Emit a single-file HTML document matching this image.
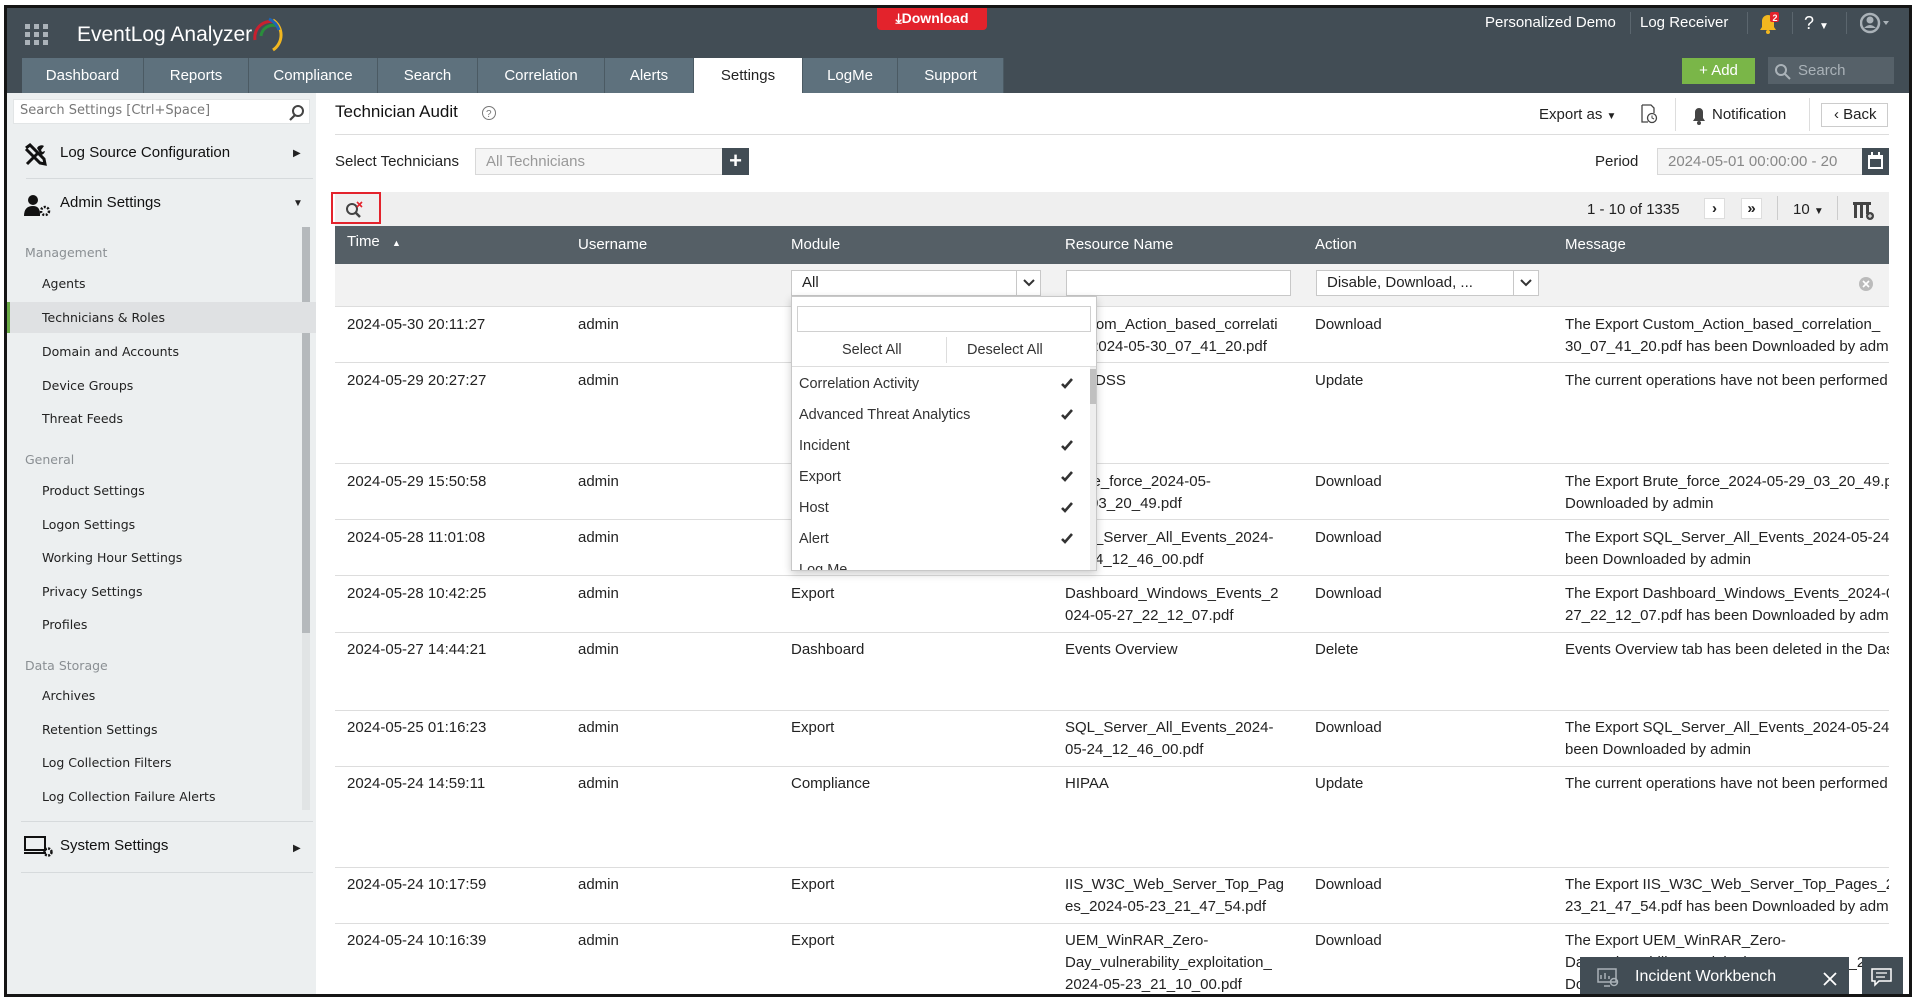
<!DOCTYPE html>
<html><head><meta charset="utf-8">
<style>
*{box-sizing:border-box;margin:0;padding:0}
body{width:1920px;height:1003px;background:#fff;position:relative;overflow:hidden;font-family:"Liberation Sans",sans-serif;font-size:15px;color:#222}
.a{position:absolute}
.frame{position:absolute;left:4px;top:5px;width:1908px;height:992px;border:3px solid #151515;overflow:hidden;background:#fff}
.hdr{left:0;top:0;width:1902px;height:85px;background:#424d55}
.tab{top:50px;height:35px;background:#5e717d;color:#fff;font-size:15px;line-height:35px;text-align:center;border-right:1px solid #4b5a63}
.tab.on{background:#fff;color:#222}
.side{left:0;top:85px;width:309px;height:905px;background:#eceff0}
.sd{font-family:"DejaVu Sans",sans-serif;font-size:12.5px;color:#222}
.sh{font-family:"DejaVu Sans",sans-serif;font-size:12.5px;color:#8a8f93}
.th{color:#fff;font-size:15px}
.c{font-size:15px;color:#222;line-height:22px}
.hl{height:1px;background:#ddd;left:328px;width:1554px}
.dd{font-size:14.5px;color:#333}
</style></head><body>
<div class="frame">
<div class="a hdr"></div>
<svg class="a" style="left:18px;top:16px" width="24" height="22"><g fill="#aab2b8"><rect x="0" y="0" width="5" height="5"/><rect x="9" y="0" width="5" height="5"/><rect x="18" y="0" width="5" height="5"/><rect x="0" y="8" width="5" height="5"/><rect x="9" y="8" width="5" height="5"/><rect x="18" y="8" width="5" height="5"/><rect x="0" y="16" width="5" height="5"/><rect x="9" y="16" width="5" height="5"/><rect x="18" y="16" width="5" height="5"/></g></svg>
<div class="a" style="left:70px;top:15px;color:#fff;font-size:21px">EventLog Analyzer</div>
<svg class="a" style="left:244px;top:6px" width="40" height="40"><path d="M4 26 A16 16 0 0 1 24 8" stroke="#c8202f" stroke-width="3" fill="none"/><path d="M10 22 A12 12 0 0 1 26 12" stroke="#2a8d3c" stroke-width="3" fill="none"/><path d="M22 6 A18 18 0 0 1 22 36" stroke="#f2b71f" stroke-width="3" fill="none"/><path d="M18 5 A18 18 0 0 1 28 16" stroke="#1e63b5" stroke-width="3" fill="none"/></svg>
<div class="a" style="left:870px;top:0;width:110px;height:22px;background:#e3232c;border-radius:0 0 4px 4px;color:#fff;font-weight:bold;font-size:14px;line-height:20px;text-align:center">⤓Download</div>
<div class="a" style="left:1478px;top:6px;color:#fff;font-size:15px">Personalized Demo</div>
<div class="a" style="left:1623px;top:4px;width:1px;height:22px;background:#5b666e"></div>
<div class="a" style="left:1633px;top:6px;color:#fff;font-size:15px">Log Receiver</div>
<div class="a" style="left:1740px;top:4px;width:1px;height:22px;background:#5b666e"></div>
<svg class="a" style="left:1750px;top:4px" width="24" height="22"><path d="M3 18 L19 18 L17 15 L17 9 A6 6 0 0 0 5 9 L5 15 Z" fill="#f2b71f"/><circle cx="11" cy="20" r="2" fill="#f2b71f"/><rect x="13" y="0" width="9" height="10" rx="2" fill="#e3232c"/><text x="15.5" y="9" fill="#fff" font-size="9" font-family="Liberation Sans" font-weight="bold">2</text></svg>
<div class="a" style="left:1785px;top:4px;width:1px;height:22px;background:#5b666e"></div>
<div class="a" style="left:1797px;top:5px;color:#fff;font-size:18px">? <span style="font-size:10px">▼</span></div>
<div class="a" style="left:1839px;top:4px;width:1px;height:22px;background:#5b666e"></div>
<svg class="a" style="left:1853px;top:4px" width="34" height="22"><circle cx="10" cy="11" r="9" fill="none" stroke="#aab2b8" stroke-width="2.5"/><circle cx="10" cy="8" r="3.5" fill="#aab2b8"/><path d="M4 16 Q10 10 16 16" fill="#aab2b8"/><path d="M23 9 L29 9 L26 13 Z" fill="#aab2b8"/></svg>
<div class="a tab" style="left:15px;width:122px">Dashboard</div>
<div class="a tab" style="left:137px;width:105px">Reports</div>
<div class="a tab" style="left:242px;width:129px">Compliance</div>
<div class="a tab" style="left:371px;width:100px">Search</div>
<div class="a tab" style="left:471px;width:127px">Correlation</div>
<div class="a tab" style="left:598px;width:89px">Alerts</div>
<div class="a tab on" style="left:687px;width:109px">Settings</div>
<div class="a tab" style="left:796px;width:95px">LogMe</div>
<div class="a tab" style="left:891px;width:106px">Support</div>
<div class="a" style="left:1675px;top:50px;width:73px;height:26px;background:#7ab648;color:#fff;font-size:15px;line-height:26px;text-align:center">+ Add</div>
<div class="a" style="left:1761px;top:49px;width:126px;height:27px;background:#566169;color:#aab2b8;font-size:15px;line-height:27px;padding-left:30px">Search</div>
<svg class="a" style="left:1767px;top:55px" width="18" height="18"><circle cx="7" cy="7" r="5" fill="none" stroke="#aab2b8" stroke-width="2"/><path d="M11 11 L16 16" stroke="#aab2b8" stroke-width="2"/></svg>

<div class="a side"></div>
<div class="a" style="left:6px;top:91px;width:297px;height:25px;background:#fff;border:1px solid #e2e5e6"></div>
<div class="a sd" style="left:13px;top:95px;color:#777;font-size:13px">Search Settings [Ctrl+Space]</div>
<svg class="a" style="left:281px;top:96px" width="18" height="18"><circle cx="10" cy="7" r="5" fill="none" stroke="#444" stroke-width="2"/><path d="M7 11 L2 16" stroke="#444" stroke-width="2.2"/></svg>
<svg class="a" style="left:17px;top:135px" width="24" height="24"><path d="M3 21 L15 9 M2 5 L6 2 L20 16 L21 21 L16 20 L2 6" stroke="#111" stroke-width="3" fill="none"/><path d="M13 5 A5 5 0 0 1 20 3 L17 7 L18 9 L21 8 A5 5 0 0 1 17 12" fill="#111"/></svg>
<div class="a" style="left:53px;top:136px;font-size:15px;color:#111">Log Source Configuration</div>
<div class="a" style="left:286px;top:140px;font-size:10px">▶</div>
<div class="a" style="left:19px;top:170px;width:287px;height:1px;background:#d6dadc"></div>
<svg class="a" style="left:17px;top:186px" width="28" height="24"><circle cx="9" cy="6" r="5" fill="#111"/><path d="M0 22 Q0 12 9 12 Q16 12 16 20 L16 22 Z" fill="#111"/><circle cx="21" cy="17" r="4" fill="none" stroke="#111" stroke-width="2.5" stroke-dasharray="2 1.5"/></svg>
<div class="a" style="left:53px;top:186px;font-size:15px;color:#111">Admin Settings</div>
<div class="a" style="left:286px;top:190px;font-size:10px">▼</div>
<div class="a" style="left:295px;top:219px;width:8px;height:583px;background:#e1e4e5"></div>
<div class="a" style="left:295px;top:219px;width:8px;height:406px;background:#b5b9bc"></div>
<div class="a sh" style="left:18px;top:237px">Management</div>
<div class="a sd" style="left:35px;top:268px">Agents</div>
<div class="a" style="left:0;top:294px;width:309px;height:31px;background:#dfe1e3"></div>
<div class="a" style="left:0;top:294px;width:3px;height:31px;background:#6aab45"></div>
<div class="a sd" style="left:35px;top:302px">Technicians &amp; Roles</div>
<div class="a sd" style="left:35px;top:336px">Domain and Accounts</div>
<div class="a sd" style="left:35px;top:370px">Device Groups</div>
<div class="a sd" style="left:35px;top:403px">Threat Feeds</div>
<div class="a sh" style="left:18px;top:444px">General</div>
<div class="a sd" style="left:35px;top:475px">Product Settings</div>
<div class="a sd" style="left:35px;top:509px">Logon Settings</div>
<div class="a sd" style="left:35px;top:542px">Working Hour Settings</div>
<div class="a sd" style="left:35px;top:576px">Privacy Settings</div>
<div class="a sd" style="left:35px;top:609px">Profiles</div>
<div class="a sh" style="left:18px;top:650px">Data Storage</div>
<div class="a sd" style="left:35px;top:680px">Archives</div>
<div class="a sd" style="left:35px;top:714px">Retention Settings</div>
<div class="a sd" style="left:35px;top:747px">Log Collection Filters</div>
<div class="a sd" style="left:35px;top:781px">Log Collection Failure Alerts</div>
<div class="a" style="left:14px;top:813px;width:292px;height:1px;background:#d6dadc"></div>
<svg class="a" style="left:17px;top:828px" width="30" height="22"><rect x="1" y="1" width="20" height="13" fill="none" stroke="#111" stroke-width="2"/><path d="M0 17 L22 17" stroke="#111" stroke-width="2"/><circle cx="24" cy="16" r="3.5" fill="none" stroke="#111" stroke-width="2.5" stroke-dasharray="2 1.3"/></svg>
<div class="a" style="left:53px;top:829px;font-size:15px;color:#111">System Settings</div>
<div class="a" style="left:286px;top:835px;font-size:10px">▶</div>
<div class="a" style="left:14px;top:864px;width:292px;height:1px;background:#d6dadc"></div>

<div class="a" style="left:328px;top:94px;font-size:17px;color:#111">Technician Audit</div>
<svg class="a" style="left:474px;top:97px" width="16" height="16"><circle cx="8" cy="8" r="6.5" fill="none" stroke="#777"/><text x="5" y="12" font-size="10" fill="#777" font-family="Liberation Sans">?</text></svg>
<div class="a" style="left:1532px;top:98px;font-size:15px">Export as <span style="font-size:10px">▼</span></div>
<svg class="a" style="left:1633px;top:96px" width="18" height="20"><path d="M2 1 L11 1 L14 4 L14 9 M2 1 L2 18 L8 18" fill="none" stroke="#444" stroke-width="1.3"/><circle cx="12" cy="14" r="4.5" fill="none" stroke="#444" stroke-width="1.3"/><path d="M12 11.5 L12 14 L14 15" stroke="#444" fill="none"/></svg>
<div class="a" style="left:1668px;top:90px;width:1px;height:33px;background:#ddd"></div>
<svg class="a" style="left:1685px;top:98px" width="14" height="20"><path d="M1 15 L13 15 L11 12 L11 6 A4 4 0 0 0 3 6 L3 12 Z" fill="#444"/><circle cx="7" cy="17" r="2" fill="#444"/></svg>
<div class="a" style="left:1705px;top:98px;font-size:15px">Notification</div>
<div class="a" style="left:1802px;top:90px;width:1px;height:33px;background:#ddd"></div>
<div class="a" style="left:1814px;top:95px;width:67px;height:24px;border:1px solid #ccc;font-size:15px;line-height:22px;padding-left:12px">‹ Back</div>
<div class="a hl" style="top:126px"></div>
<div class="a" style="left:328px;top:145px;font-size:15px">Select Technicians</div>
<div class="a" style="left:468px;top:140px;width:248px;height:27px;background:#f5f5f5;border:1px solid #d8d8d8;color:#999;font-size:15px;line-height:25px;padding-left:10px">All Technicians</div>
<div class="a" style="left:715px;top:140px;width:27px;height:27px;background:#424d55;color:#fff;font-size:22px;line-height:25px;text-align:center;font-weight:bold">+</div>
<div class="a" style="left:1588px;top:145px;font-size:15px">Period</div>
<div class="a" style="left:1650px;top:140px;width:207px;height:27px;background:#f5f5f5;border:1px solid #d8d8d8;color:#888;font-size:15px;line-height:25px;padding-left:10px;overflow:hidden;white-space:nowrap">2024-05-01 00:00:00 - 20</div>
<div class="a" style="left:1855px;top:140px;width:27px;height:27px;background:#424d55"></div>
<svg class="a" style="left:1860px;top:143px" width="17" height="20"><rect x="1" y="4" width="15" height="14" fill="#fff"/><rect x="3" y="8" width="11" height="8" fill="#424d55"/><rect x="4" y="1" width="2" height="5" fill="#fff"/><rect x="11" y="1" width="2" height="5" fill="#fff"/></svg>

<div class="a" style="left:328px;top:184px;width:1554px;height:34px;background:#efefef"></div>
<div class="a" style="left:324px;top:184px;width:50px;height:32px;border:2px solid #e3232c"></div>
<svg class="a" style="left:338px;top:192px" width="22" height="20"><circle cx="7" cy="9" r="5" fill="none" stroke="#444" stroke-width="2"/><path d="M10.5 12.5 L15 17" stroke="#444" stroke-width="2.5"/><path d="M12 2 L17 7 M17 2 L12 7" stroke="#e3232c" stroke-width="1.6"/></svg>
<div class="a" style="left:1580px;top:193px;font-size:15px">1 - 10 of 1335</div>
<div class="a" style="left:1697px;top:190px;width:21px;height:21px;background:#fff;border:1px solid #ddd;text-align:center;font-weight:bold;line-height:19px">›</div>
<div class="a" style="left:1734px;top:190px;width:21px;height:21px;background:#fff;border:1px solid #ddd;text-align:center;font-weight:bold;line-height:19px">»</div>
<div class="a" style="left:1770px;top:188px;width:1px;height:24px;background:#ccc"></div>
<div class="a" style="left:1786px;top:193px;font-size:15px">10 <span style="font-size:10px">▼</span></div>
<div class="a" style="left:1830px;top:188px;width:1px;height:24px;background:#ccc"></div>
<svg class="a" style="left:1846px;top:193px" width="22" height="20"><rect x="0" y="1" width="18" height="3" fill="#444"/><rect x="1" y="4" width="3" height="13" fill="#444"/><rect x="7" y="4" width="3" height="13" fill="#444"/><rect x="13" y="4" width="3" height="9" fill="#444"/><circle cx="17" cy="15" r="4" fill="#444"/><path d="M15 15 L19 15 M17 13 L17 17" stroke="#fff"/></svg>

<div class="a" style="left:328px;top:218px;width:1554px;height:38px;background:#555f66"></div>
<div class="a th" style="left:340px;top:225px">Time <span style="font-size:9px;margin-left:8px">▲</span></div>
<div class="a th" style="left:571px;top:228px">Username</div>
<div class="a th" style="left:784px;top:228px">Module</div>
<div class="a th" style="left:1058px;top:228px">Resource Name</div>
<div class="a th" style="left:1308px;top:228px">Action</div>
<div class="a th" style="left:1558px;top:228px">Message</div>
<div class="a" style="left:328px;top:256px;width:1554px;height:43px;background:#f2f2f2"></div>
<div class="a" style="left:784px;top:262px;width:250px;height:26px;background:#fff;border:1px solid #c8c8c8;font-size:15px;line-height:24px;padding-left:10px">All</div>
<div class="a" style="left:1009px;top:262px;width:1px;height:26px;background:#c8c8c8"></div>
<svg class="a" style="left:1016px;top:269px" width="12" height="12"><path d="M1 3 L6 8 L11 3" stroke="#333" stroke-width="2" fill="none"/></svg>
<div class="a" style="left:1059px;top:262px;width:225px;height:26px;background:#fff;border:1px solid #c8c8c8"></div>
<div class="a" style="left:1309px;top:262px;width:223px;height:26px;background:#fff;border:1px solid #c8c8c8;font-size:15px;line-height:24px;padding-left:10px">Disable, Download, ...</div>
<div class="a" style="left:1506px;top:262px;width:1px;height:26px;background:#c8c8c8"></div>
<svg class="a" style="left:1513px;top:269px" width="12" height="12"><path d="M1 3 L6 8 L11 3" stroke="#333" stroke-width="2" fill="none"/></svg>
<svg class="a" style="left:1851px;top:268px" width="16" height="16"><circle cx="8" cy="8" r="7" fill="#bbb"/><path d="M5 5 L11 11 M11 5 L5 11" stroke="#fff" stroke-width="1.6"/></svg>

<div class="a hl" style="top:298px"></div>
<div class="a hl" style="top:354px"></div>
<div class="a hl" style="top:455px"></div>
<div class="a hl" style="top:511px"></div>
<div class="a hl" style="top:567px"></div>
<div class="a hl" style="top:624px"></div>
<div class="a hl" style="top:702px"></div>
<div class="a hl" style="top:758px"></div>
<div class="a hl" style="top:859px"></div>
<div class="a hl" style="top:915px"></div>

<div class="a" style="left:1558px;top:300px;width:324px;height:690px;overflow:hidden">
 <div class="a c" style="left:0;top:6px;white-space:nowrap">The Export Custom_Action_based_correlation_<br>30_07_41_20.pdf has been Downloaded by admin</div>
 <div class="a c" style="left:0;top:62px;white-space:nowrap">The current operations have not been performed</div>
 <div class="a c" style="left:0;top:163px;white-space:nowrap">The Export Brute_force_2024-05-29_03_20_49.pdf has<br>Downloaded by admin</div>
 <div class="a c" style="left:0;top:219px;white-space:nowrap">The Export SQL_Server_All_Events_2024-05-24 has<br>been Downloaded by admin</div>
 <div class="a c" style="left:0;top:275px;white-space:nowrap">The Export Dashboard_Windows_Events_2024-05-<br>27_22_12_07.pdf has been Downloaded by admin</div>
 <div class="a c" style="left:0;top:331px;white-space:nowrap">Events Overview tab has been deleted in the Dashboard</div>
 <div class="a c" style="left:0;top:409px;white-space:nowrap">The Export SQL_Server_All_Events_2024-05-24 has<br>been Downloaded by admin</div>
 <div class="a c" style="left:0;top:465px;white-space:nowrap">The current operations have not been performed</div>
 <div class="a c" style="left:0;top:566px;white-space:nowrap">The Export IIS_W3C_Web_Server_Top_Pages_2024-05-<br>23_21_47_54.pdf has been Downloaded by admin</div>
 <div class="a c" style="left:0;top:622px;white-space:nowrap">The Export UEM_WinRAR_Zero-<br>Day_vulnerability_exploitation_2024-05-23_21<br>Downloaded by admin</div>
</div>

<div class="a" style="left:0;top:300px;width:1558px;height:690px;overflow:hidden">
<div class="a c" style="left:340px;top:6px">2024-05-30 20:11:27</div><div class="a c" style="left:571px;top:6px">admin</div><div class="a c" style="left:784px;top:6px">Correlation</div><div class="a c" style="left:1058px;top:6px;white-space:nowrap">Custom_Action_based_correlati<br>on_2024-05-30_07_41_20.pdf</div><div class="a c" style="left:1308px;top:6px">Download</div>
<div class="a c" style="left:340px;top:62px">2024-05-29 20:27:27</div><div class="a c" style="left:571px;top:62px">admin</div><div class="a c" style="left:784px;top:62px">Compliance</div><div class="a c" style="left:1058px;top:62px">PCI-DSS</div><div class="a c" style="left:1308px;top:62px">Update</div>
<div class="a c" style="left:340px;top:163px">2024-05-29 15:50:58</div><div class="a c" style="left:571px;top:163px">admin</div><div class="a c" style="left:784px;top:163px">Export</div><div class="a c" style="left:1058px;top:163px;white-space:nowrap">Brute_force_2024-05-<br>29_03_20_49.pdf</div><div class="a c" style="left:1308px;top:163px">Download</div>
<div class="a c" style="left:340px;top:219px">2024-05-28 11:01:08</div><div class="a c" style="left:571px;top:219px">admin</div><div class="a c" style="left:784px;top:219px">Export</div><div class="a c" style="left:1058px;top:219px;white-space:nowrap">SQL_Server_All_Events_2024-<br>05-24_12_46_00.pdf</div><div class="a c" style="left:1308px;top:219px">Download</div>
<div class="a c" style="left:340px;top:275px">2024-05-28 10:42:25</div><div class="a c" style="left:571px;top:275px">admin</div><div class="a c" style="left:784px;top:275px">Export</div><div class="a c" style="left:1058px;top:275px;white-space:nowrap">Dashboard_Windows_Events_2<br>024-05-27_22_12_07.pdf</div><div class="a c" style="left:1308px;top:275px">Download</div>
<div class="a c" style="left:340px;top:331px">2024-05-27 14:44:21</div><div class="a c" style="left:571px;top:331px">admin</div><div class="a c" style="left:784px;top:331px">Dashboard</div><div class="a c" style="left:1058px;top:331px">Events Overview</div><div class="a c" style="left:1308px;top:331px">Delete</div>
<div class="a c" style="left:340px;top:409px">2024-05-25 01:16:23</div><div class="a c" style="left:571px;top:409px">admin</div><div class="a c" style="left:784px;top:409px">Export</div><div class="a c" style="left:1058px;top:409px;white-space:nowrap">SQL_Server_All_Events_2024-<br>05-24_12_46_00.pdf</div><div class="a c" style="left:1308px;top:409px">Download</div>
<div class="a c" style="left:340px;top:465px">2024-05-24 14:59:11</div><div class="a c" style="left:571px;top:465px">admin</div><div class="a c" style="left:784px;top:465px">Compliance</div><div class="a c" style="left:1058px;top:465px">HIPAA</div><div class="a c" style="left:1308px;top:465px">Update</div>
<div class="a c" style="left:340px;top:566px">2024-05-24 10:17:59</div><div class="a c" style="left:571px;top:566px">admin</div><div class="a c" style="left:784px;top:566px">Export</div><div class="a c" style="left:1058px;top:566px;white-space:nowrap">IIS_W3C_Web_Server_Top_Pag<br>es_2024-05-23_21_47_54.pdf</div><div class="a c" style="left:1308px;top:566px">Download</div>
<div class="a c" style="left:340px;top:622px">2024-05-24 10:16:39</div><div class="a c" style="left:571px;top:622px">admin</div><div class="a c" style="left:784px;top:622px">Export</div><div class="a c" style="left:1058px;top:622px;white-space:nowrap">UEM_WinRAR_Zero-<br>Day_vulnerability_exploitation_<br>2024-05-23_21_10_00.pdf</div><div class="a c" style="left:1308px;top:622px">Download</div>
</div>

<div class="a" style="left:784px;top:288px;width:306px;height:275px;background:#fff;border:1px solid #c8c8c8;box-shadow:0 3px 8px rgba(0,0,0,.2);overflow:hidden">
 <div class="a" style="left:5px;top:9px;width:294px;height:26px;border:1px solid #d0d0d0"></div>
 <div class="a dd" style="left:50px;top:45px">Select All</div>
 <div class="a" style="left:154px;top:40px;width:1px;height:26px;background:#ddd"></div>
 <div class="a dd" style="left:175px;top:45px">Deselect All</div>
 <div class="a" style="left:0;top:69px;width:306px;height:1px;background:#ddd"></div>
 <div class="a dd" style="left:7px;top:79px">Correlation Activity</div>
 <div class="a dd" style="left:7px;top:110px">Advanced Threat Analytics</div>
 <div class="a dd" style="left:7px;top:141px">Incident</div>
 <div class="a dd" style="left:7px;top:172px">Export</div>
 <div class="a dd" style="left:7px;top:203px">Host</div>
 <div class="a dd" style="left:7px;top:234px">Alert</div>
 <div class="a dd" style="left:7px;top:265px">Log Me</div>
 <svg class="a" style="left:268px;top:80px" width="14" height="200"><g stroke="#333" stroke-width="2.6" fill="none"><path d="M2 7 L5 10 L12 2"/><path d="M2 38 L5 41 L12 33"/><path d="M2 69 L5 72 L12 64"/><path d="M2 100 L5 103 L12 95"/><path d="M2 131 L5 134 L12 126"/><path d="M2 162 L5 165 L12 157"/></g></svg>
 <div class="a" style="left:298px;top:70px;width:7px;height:204px;background:#eee"></div>
 <div class="a" style="left:298px;top:72px;width:7px;height:35px;background:#c0c0c0"></div>
</div>

<div class="a" style="left:1573px;top:949px;width:269px;height:42px;background:#424d55"></div>
<svg class="a" style="left:1590px;top:960px" width="24" height="20"><rect x="1" y="1" width="18" height="13" fill="none" stroke="#aab2b8" stroke-width="1.5"/><path d="M4 11 L4 7 M8 11 L8 5 M12 11 L12 8" stroke="#aab2b8" stroke-width="1.5"/><circle cx="17" cy="14" r="3.5" fill="none" stroke="#aab2b8" stroke-width="1.5"/><path d="M7 18 L13 18" stroke="#aab2b8" stroke-width="1.5"/></svg>
<div class="a" style="left:1628px;top:960px;color:#fff;font-size:16px">Incident Workbench</div>
<svg class="a" style="left:1816px;top:964px" width="14" height="14"><path d="M1 1 L13 13 M13 1 L1 13" stroke="#fff" stroke-width="1.8"/></svg>
<div class="a" style="left:1855px;top:949px;width:41px;height:42px;background:#424d55"></div>
<svg class="a" style="left:1864px;top:960px" width="22" height="20"><path d="M1 1 L20 1 L20 13 L8 13 L4 17 L4 13 L1 13 Z" fill="none" stroke="#fff" stroke-width="1.5"/><path d="M5 5 L16 5 M5 9 L14 9" stroke="#fff" stroke-width="1.3"/></svg>
</div>
</body></html>
